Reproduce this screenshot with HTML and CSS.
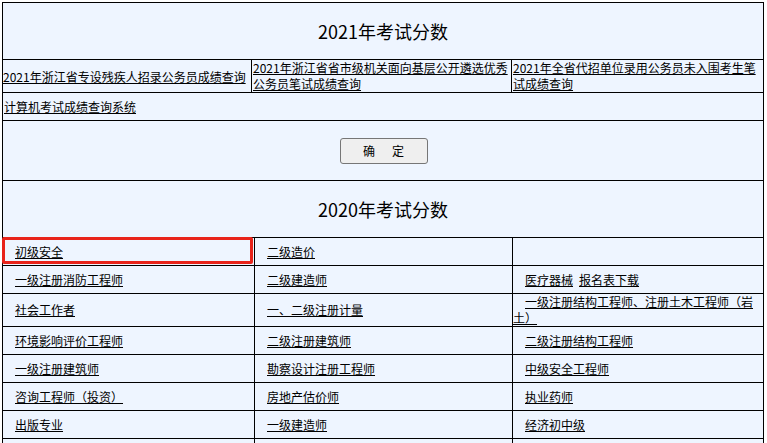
FILE: index.html
```html
<!DOCTYPE html>
<html lang="zh-CN">
<head>
<meta charset="utf-8">
<title>考试分数</title>
<link rel="stylesheet" href="styles.css">
</head>
<body>
<div class="board">
  <div class="row title-row"><h2 class="title">2021年考试分数</h2></div>
  <div class="row links-row">
    <div class="lcell lcell-mid"><a href="#">2021年浙江省专设残疾人招录公务员成绩查询</a></div>
    <div class="lcell"><a href="#">2021年浙江省省市级机关面向基层公开遴选优秀公务员笔试成绩查询</a></div>
    <div class="lcell"><a href="#">2021年全省代招单位录用公务员未入围考生笔试成绩查询</a></div>
  </div>
  <div class="row single-row"><a href="#">计算机考试成绩查询系统</a></div>
  <div class="row btn-row"><button class="btn" type="button">确<span class="sp"></span>定</button></div>
  <div class="row title-row"><h2 class="title">2020年考试分数</h2></div>

  <div class="row grid-row">
    <div class="gcell hl"><div class="in"><a href="#">初级安全</a></div></div>
    <div class="gcell"><div class="in"><a href="#">二级造价</a></div></div>
    <div class="gcell"><div class="in"></div></div>
  </div>
  <div class="row grid-row">
    <div class="gcell"><div class="in"><a href="#">一级注册消防工程师</a></div></div>
    <div class="gcell"><div class="in"><a href="#">二级建造师</a></div></div>
    <div class="gcell"><div class="in"><a href="#">医疗器械</a><a class="next" href="#">报名表下载</a></div></div>
  </div>
  <div class="row grid-row">
    <div class="gcell"><div class="in"><a href="#">社会工作者</a></div></div>
    <div class="gcell"><div class="in"><a href="#">一、二级注册计量</a></div></div>
    <div class="gcell"><div class="in"><a href="#">一级注册结构工程师、注册土木工程师（岩土）</a></div></div>
  </div>
  <div class="row grid-row">
    <div class="gcell"><div class="in"><a href="#">环境影响评价工程师</a></div></div>
    <div class="gcell"><div class="in"><a href="#">二级注册建筑师</a></div></div>
    <div class="gcell"><div class="in"><a href="#">二级注册结构工程师</a></div></div>
  </div>
  <div class="row grid-row">
    <div class="gcell"><div class="in"><a href="#">一级注册建筑师</a></div></div>
    <div class="gcell"><div class="in"><a href="#">勘察设计注册工程师</a></div></div>
    <div class="gcell"><div class="in"><a href="#">中级安全工程师</a></div></div>
  </div>
  <div class="row grid-row">
    <div class="gcell"><div class="in"><a href="#">咨询工程师（投资）</a></div></div>
    <div class="gcell"><div class="in"><a href="#">房地产估价师</a></div></div>
    <div class="gcell"><div class="in"><a href="#">执业药师</a></div></div>
  </div>
  <div class="row grid-row">
    <div class="gcell"><div class="in"><a href="#">出版专业</a></div></div>
    <div class="gcell"><div class="in"><a href="#">一级建造师</a></div></div>
    <div class="gcell"><div class="in"><a href="#">经济初中级</a></div></div>
  </div>
  <div class="row grid-row">
    <div class="gcell"><div class="in"></div></div>
    <div class="gcell"><div class="in"></div></div>
    <div class="gcell"><div class="in"></div></div>
  </div>
</div>
</body>
</html>
```

FILE: styles.css
```css
html, body {
  background: #ffffff;
}

body {
  margin: 2px;
  font-family: "Noto Sans CJK SC", "Liberation Sans", sans-serif;
  font-size: 12px;
  line-height: 16px;
  color: #000000;
}

a {
  color: #000000;
  text-decoration: underline;
}

.board {
  width: 762px;
  box-sizing: border-box;
  border: 1px solid #000000;
  border-bottom: none;
  background: #eef5ff;
}

.row {
  border-bottom: 1px solid #000000;
}

.title-row {
  height: 56px;
  display: flex;
  align-items: center;
  justify-content: center;
}

.title {
  margin: 0;
  font-size: 18px;
  line-height: 22px;
  font-weight: normal;
}

.links-row {
  display: grid;
  grid-template-columns: 248px 260px 252px;
  min-height: 32px;
}

.lcell {
  padding-left: 1px;
}

.lcell + .lcell {
  border-left: 1px solid #000000;
}

.lcell-mid {
  display: flex;
  align-items: center;
  padding-left: 0;
  padding-top: 1px;
}

.single-row {
  height: 27px;
  display: flex;
  align-items: center;
  padding-left: 1px;
}

.btn-row {
  height: 59px;
  display: flex;
  align-items: center;
  justify-content: center;
}

.btn {
  width: 88px;
  height: 26px;
  margin-left: 1px;
  box-sizing: border-box;
  border: 1px solid #767676;
  border-radius: 3px;
  background: #efefef;
  font-family: "Noto Sans CJK SC", sans-serif;
  font-size: 12px;
  line-height: 16px;
  color: #000000;
  padding: 0;
}

.sp {
  display: inline-block;
  width: 17px;
}

.grid-row {
  display: grid;
  grid-template-columns: 251px 258px 251px;
}

.gcell {
  display: flex;
  align-items: center;
  min-height: 27px;
}

.gcell + .gcell {
  border-left: 1px solid #000000;
}

.in {
  width: 100%;
  text-indent: 12px;
}

.next {
  margin-left: 6px;
}

.hl {
  position: relative;
}

.hl::after {
  content: "";
  position: absolute;
  left: -1px;
  top: -1px;
  width: 251px;
  height: 27px;
  box-sizing: border-box;
  border: 3px solid #e8231a;
  border-radius: 2px;
}
```
